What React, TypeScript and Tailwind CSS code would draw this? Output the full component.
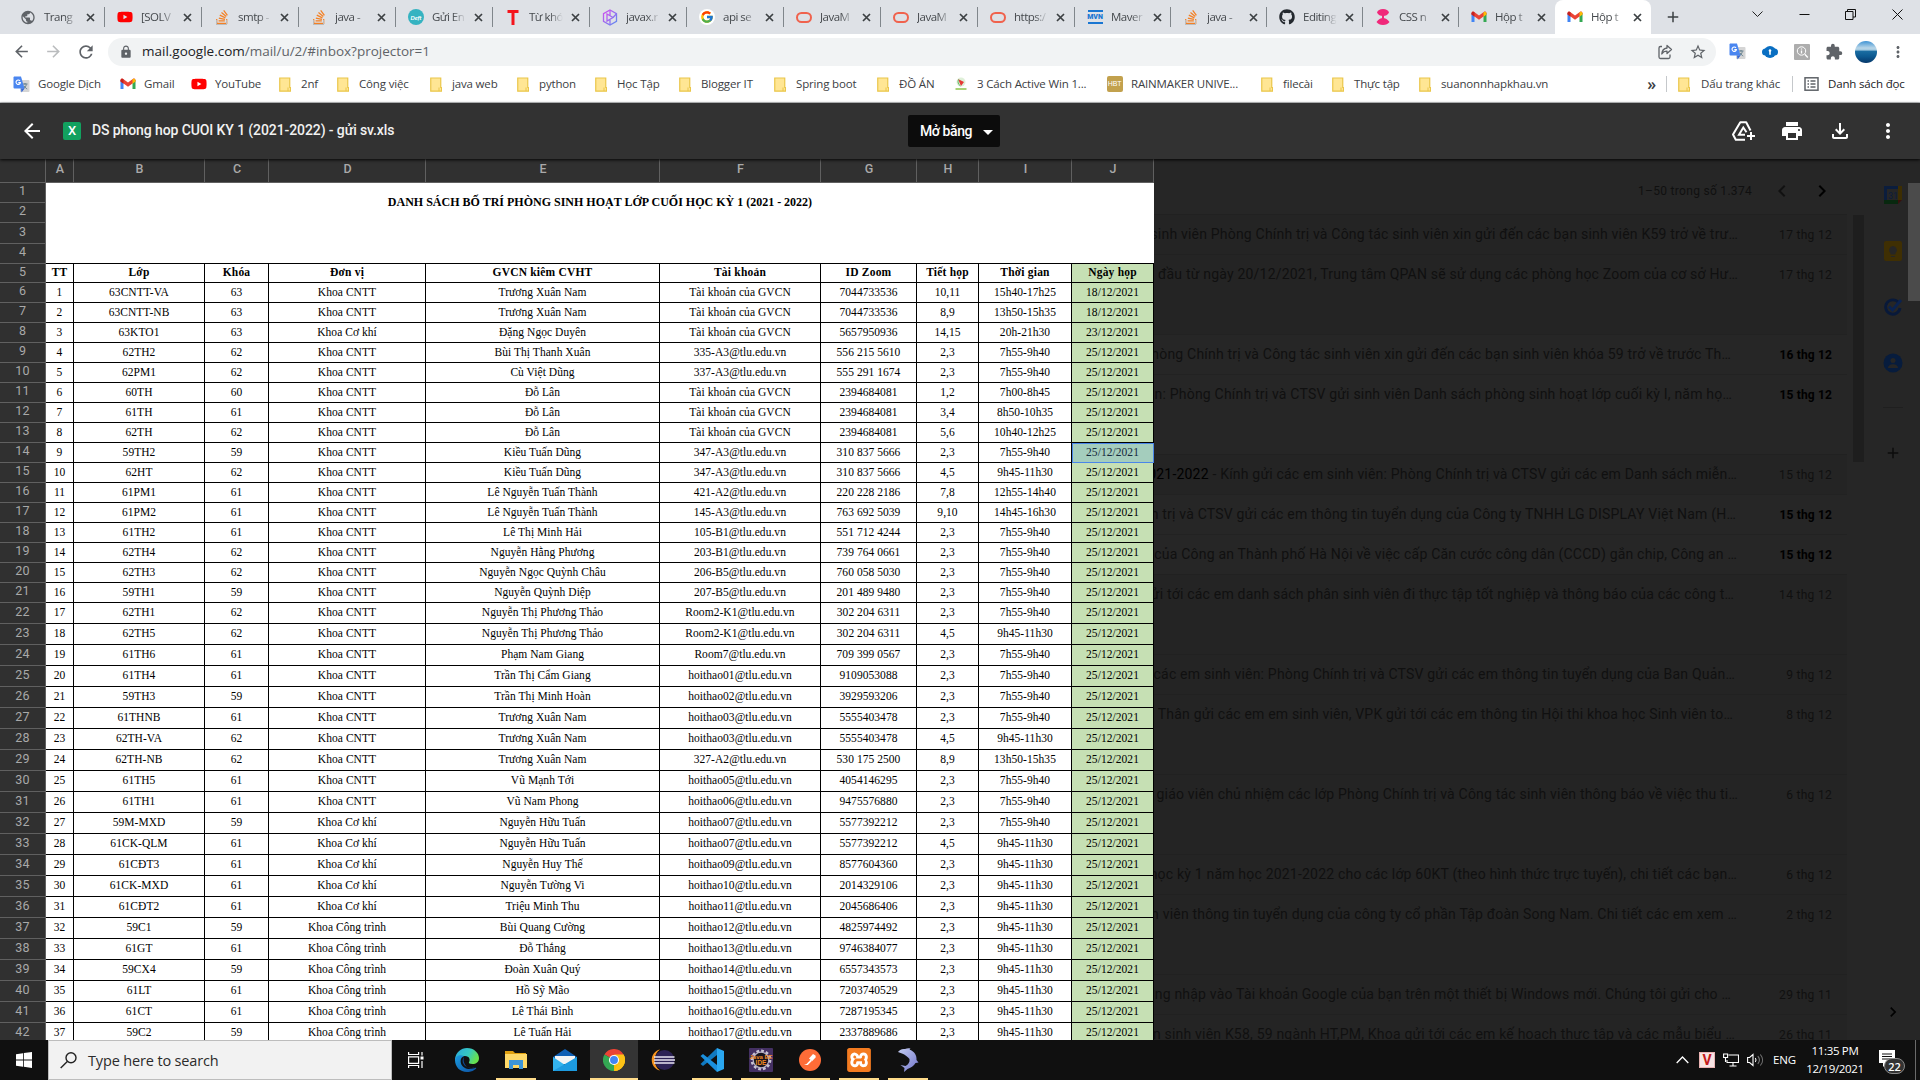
import React from "react";
import { FcGoogle } from "react-icons/fc";
import { FaYoutube, FaGithub } from "react-icons/fa";
import { FaStackOverflow } from "react-icons/fa6";
import { SiXampp } from "react-icons/si";
import {
  MdArrowBack,
  MdArrowForward,
  MdRefresh,
  MdLock,
  MdStarOutline,
  MdExtension,
  MdMoreVert,
  MdPrint,
  MdArrowDropDown,
  MdAdd,
  MdOutlineFileDownload,
  MdPublic,
  MdChevronLeft,
  MdChevronRight,
} from "react-icons/md";

const UI = "font-['Open_Sans','Noto_Sans',sans-serif]";

/* ---------- small logos ---------- */

function Gmail() {
  return (
    <svg width="16" height="16" viewBox="0 0 16 16">
      <path d="M0.5 4v9h3V6.5z" fill="#4285f4" />
      <path d="M15.5 4v9h-3V6.5z" fill="#34a853" />
      <path d="M0.5 4.2c0-1.6 1.8-2 2.7-1.2L8 6.6 12.800 3c.9-.8 2.700-.4 2.700 1.200v1L8 10.700.5 5.200z" fill="#ea4335" />
      <path d="M12.500 3.300c.9-.9 3-.6 3 1.200v1l-3 2.200z" fill="#fbbc04" />
      <path d="M.5 4.500c0-1.800 2.100-2.100 3-1.200v4.400L.5 5.500z" fill="#c5221f" />
    </svg>
  );
}

function Translate() {
  return (
    <svg width="17" height="17" viewBox="0 0 17 17">
      <rect x="7" y="4" width="9.500" height="12" rx="1" fill="#d5d5d5" />
      <path d="M9.500 8h5M12 7v1.500M10.300 13c2-1.500 2.700-3 3-4.500M11 9.800c.8 1.600 2 2.500 3.200 3.200" stroke="#607d8b" strokeWidth="1" fill="none" />
      <path d="M1 .5h7l3.500 12H1.500a1 1 0 0 1-1-1V1.500z" fill="#4a86f0" />
      <path d="M8.500 16.500l3-4H8z" fill="#3367d6" />
      <path d="M7 4.900A2.200 2.200 0 1 0 7.400 6.600H5.300" stroke="#fff" strokeWidth="1.100" fill="none" />
    </svg>
  );
}

function Folder() {
  return (
    <svg width="12" height="15" viewBox="0 0 12 15">
      <path d="M.75 1h10v9.500h.8v3.700H.75z" fill="#ffe694" stroke="#eac64a" strokeWidth="1.200" />
      <path d="M9 10.500v3.500" stroke="#eac64a" strokeWidth="1" />
    </svg>
  );
}

function Oracle() {
  return <span className="block h-[11px] w-4 rounded-full border-[2.500px] border-[#f0624d]" />;
}

function Stack() {
  return (
    <span className="relative block h-4 w-4">
      <FaStackOverflow size={16} color="#f48024" />
      <span className="absolute bottom-0 left-[2px] h-[5px] w-[11px] border-x border-b border-[#bcbbbb]" />
    </span>
  );
}

function Deft() {
  return (
    <span className="flex h-4 w-4 items-center justify-center rounded-full bg-[#35b3c1] font-['Lato',sans-serif] text-[6px] font-bold italic text-white">
      Deft
    </span>
  );
}

function BigT() {
  return (
    <svg width="16" height="16" viewBox="0 0 16 16">
      <path d="M2.500 1h11v3h-4v12h-3V4h-4z" fill="#f4141c" />
    </svg>
  );
}

function Hexagon() {
  return (
    <svg width="16" height="17" viewBox="0 0 16 17" fill="none" strokeWidth="1.300">
      <defs>
        <linearGradient id="hx" x1="0" y1="0" x2="1" y2="1">
          <stop offset="0" stopColor="#d44df0" />
          <stop offset="1" stopColor="#5b8def" />
        </linearGradient>
      </defs>
      <path d="M8 1l6.500 3.700v7.600L8 16l-6.500-3.700V4.700z" stroke="url(#hx)" />
      <path d="M5 5l6 3.500L5 12zM8 1v5.500M8 16v-5M14.500 4.700L11 8.500" stroke="url(#hx)" />
    </svg>
  );
}

function GoogleG() {
  return (
    <span className="flex h-4 w-4 items-center justify-center rounded-full bg-white">
      <FcGoogle size={14} />
    </span>
  );
}

function Maven() {
  return (
    <span className="flex h-[14px] w-[15px] items-center justify-center border-y-2 border-[#1976d2] text-[#1976d2]">
      <span className="font-['Roboto',sans-serif] text-[7px] font-black leading-none">MVN</span>
    </span>
  );
}

function PinkIcon() {
  return (
    <svg width="14" height="16" viewBox="0 0 14 16" fill="#f0287a">
      <path d="M7 0c3 0 5.500 1.500 6 3.500C12 6 9.500 7 7 7S2 6 1 3.500C1.500 1.500 4 0 7 0z" />
      <path d="M7 9c2.500 0 4.500 1.500 6.500 4-1.500 2-3.500 3-6.500 3s-5-1-6.500-3C2.500 10.500 4.500 9 7 9zM6 6h2v4H6z" />
    </svg>
  );
}

/* ---------- browser chrome ---------- */

type Tab = { icon: React.ReactNode; label: string };

const wideTabs: Tab[] = [
  { icon: <MdPublic size={17} color="#5f6368" />, label: "Trang" },
  { icon: <FaYoutube size={16} color="#f00" />, label: "[SOLV" },
  { icon: <Stack />, label: "smtp -" },
  { icon: <Stack />, label: "java -" },
  { icon: <Deft />, label: "Gửi En" },
  { icon: <BigT />, label: "Từ khó" },
  { icon: <Hexagon />, label: "javax.r" },
  { icon: <GoogleG />, label: "api se" },
  { icon: <Oracle />, label: "JavaM" },
  { icon: <Oracle />, label: "JavaM" },
  { icon: <Oracle />, label: "https:/" },
];

const narrowTabs: Tab[] = [
  { icon: <Maven />, label: "Maver" },
  { icon: <Stack />, label: "java -" },
  { icon: <FaGithub size={16} color="#24292f" />, label: "Editing" },
  { icon: <PinkIcon />, label: "CSS n" },
  { icon: <Gmail />, label: "Hộp t" },
];

function TabInner({ tab }: { tab: Tab }) {
  return (
    <>
      <span className="flex w-4 shrink-0 items-center justify-center">{tab.icon}</span>
      <span className="ml-2 w-[34px] shrink-0 overflow-hidden whitespace-nowrap text-[11.500px] tracking-[-0.5px] text-[#45494d] [mask-image:linear-gradient(to_right,black_60%,transparent)]">
        {tab.label}
      </span>
      <svg className="ml-2 shrink-0" width="9" height="9" viewBox="0 0 9 9" stroke="#3c4043" strokeWidth="1.700">
        <path d="M1 1l7 7M8 1L1 8" />
      </svg>
    </>
  );
}

function TabStrip() {
  return (
    <div className="flex h-[34px] items-stretch bg-[#dee1e6] pl-2">
      {wideTabs.map((t, i) => (
        <div key={i} className="flex w-[97px] items-center pl-3">
          <TabInner tab={t} />
          <span className="ml-auto h-5 w-px bg-[#80868b]" />
        </div>
      ))}
      {narrowTabs.map((t, i) => (
        <div key={i} className="flex w-24 items-center pl-3">
          <TabInner tab={t} />
          {i < narrowTabs.length - 1 && <span className="ml-auto h-5 w-px bg-[#80868b]" />}
        </div>
      ))}
      <div className="flex w-24 items-center rounded-t-lg bg-white pl-3">
        <TabInner tab={{ icon: <Gmail />, label: "Hộp t" }} />
      </div>
      <div className="flex w-11 items-center justify-center">
        <MdAdd size={18} color="#3c4043" />
      </div>
      <div className="ml-auto flex w-[168px] items-start justify-between pr-[17px] pt-[9px]">
        <svg width="11" height="11" viewBox="0 0 11 11" fill="none" stroke="#222">
          <path d="M.5 2.500l5 5 5-5" />
        </svg>
        <svg width="11" height="11" viewBox="0 0 11 11" fill="none" stroke="#111">
          <path d="M.5 5.500h10" />
        </svg>
        <svg width="11" height="11" viewBox="0 0 11 11" fill="none" stroke="#111">
          <path d="M.5 2.500h7.500v8H.5zM2.500 2.500v-2h8v7.500H8" />
        </svg>
        <svg width="11" height="11" viewBox="0 0 11 11" fill="none" stroke="#111">
          <path d="M.5.5l10 10M10.500.5l-10 10" />
        </svg>
      </div>
    </div>
  );
}

function Toolbar() {
  return (
    <div className="flex h-[35px] items-center bg-white text-[#5f6368]">
      <div className="flex w-[108px] items-center gap-[13px] pl-3">
        <MdArrowBack size={19} />
        <MdArrowForward size={19} className="text-[#babcbe]" />
        <MdRefresh size={20} />
      </div>
      <div className="flex h-7 w-[1608px] items-center rounded-full bg-[#f1f3f4] pl-[11px] pr-[9px]">
        <MdLock size={14} />
        <span className="ml-[9px] text-[13.500px] tracking-[-0.01px] text-[#5f6368]">
          <span className="text-[#202124]">mail.google.com</span>/mail/u/2/#inbox?projector=1
        </span>
        <svg className="ml-auto" width="17" height="16" viewBox="0 0 17 16" fill="none" stroke="#5f6368" strokeWidth="1.300">
          <path d="M5 2.500H3.500a1.500 1.500 0 0 0-1.500 1.500v9A1.500 1.500 0 0 0 3.500 14.500h8A1.500 1.500 0 0 0 13 13v-2.500" />
          <path d="M10 1.500l4.500 4-4.500 4V7.200C7.500 7.200 6 8 4.800 10c.2-3 2-5.500 5.200-6z" strokeLinejoin="round" />
        </svg>
        <MdStarOutline size={18} className="ml-[15px]" />
      </div>
      <div className="flex items-center pl-[13px]">
        <Translate />
        <svg className="ml-4" width="16" height="12" viewBox="0 0 16 12">
          <circle cx="8" cy="6" r="6" fill="#0a6fc2" />
          <rect x="0" y="2.500" width="16" height="7" rx="3.500" fill="#0a6fc2" />
          <path d="M8 3.200a1.400 1.400 0 0 1 .8 2.500v3H7.200v-3A1.400 1.400 0 0 1 8 3.200z" fill="#fff" />
        </svg>
        <svg className="ml-4" width="16" height="16" viewBox="0 0 16 16">
          <rect width="16" height="16" rx="1" fill="#adadad" />
          <circle cx="7.500" cy="7" r="4.200" fill="none" stroke="#fff" />
          <path d="M7.500 6.500v3M7.500 4.500v1M10.800 10.300l3 3.200" stroke="#fff" strokeWidth="1.300" />
        </svg>
        <MdExtension size={18} className="ml-[15px]" />
        <span className="ml-3 h-[22px] w-[22px] rounded-full bg-[linear-gradient(to_bottom,#3f93d4_0%,#b9d6e8_32%,#9ec7df_42%,#1b6ea3_45%,#0d5a91_70%,#06376a_100%)]" />
        <MdMoreVert size={18} className="ml-3" />
      </div>
    </div>
  );
}

const bookmarks: { label: string; w: number; icon?: React.ReactNode }[] = [
  { label: "Google Dịch", w: 106, icon: <Translate /> },
  { label: "Gmail", w: 71, icon: <Gmail /> },
  { label: "YouTube", w: 86, icon: <FaYoutube size={16} color="#f00" /> },
  { label: "2nf", w: 58 },
  { label: "Công việc", w: 93 },
  { label: "java web", w: 87 },
  { label: "python", w: 78 },
  { label: "Học Tập", w: 84 },
  { label: "Blogger IT", w: 95 },
  { label: "Spring boot", w: 103 },
  { label: "ĐỒ ÁN", w: 78 },
  {
    label: "3 Cách Active Win 1...",
    w: 154,
    icon: (
      <svg width="12" height="14" viewBox="0 0 12 14">
        <circle cx="6" cy="5" r="4.500" fill="#dff0d8" />
        <path d="M3 2l6 3-3 4z" fill="#e53935" />
        <path d="M3.500 2.500c-1 2-.5 5 2 6.500" stroke="#66bb6a" fill="none" />
        <path d="M.5 12h11" stroke="#8bc34a" strokeWidth="1.500" />
      </svg>
    ),
  },
  {
    label: "RAINMAKER UNIVE...",
    w: 152,
    icon: (
      <span className="flex h-4 w-4 shrink-0 items-center justify-center rounded-[2px] bg-[#c2a14d] font-['Liberation_Sans',sans-serif] text-[7px] text-white">
        HBT
      </span>
    ),
  },
  { label: "filecài", w: 71 },
  { label: "Thực tập", w: 87 },
  { label: "suanonnhapkhau.vn", w: 160 },
];

function Bookmarks() {
  return (
    <div className="flex h-[34px] items-center border-b border-[#c8cacc] bg-white pb-[3px] pl-[13px] text-[11.500px] tracking-[-0.16px] text-[#3c4043]">
      {bookmarks.map((b) => (
        <div key={b.label} className="flex shrink-0 items-center whitespace-nowrap" style={{ width: b.w }}>
          <span className="flex w-[17px] shrink-0 justify-center">{b.icon ?? <Folder />}</span>
          <span className="ml-2">{b.label}</span>
        </div>
      ))}
      <span className="ml-auto text-[16px] font-semibold leading-none">»</span>
      <span className="ml-[10px] h-4 w-px bg-[#c5c8cb]" />
      <span className="ml-[11px]">
        <Folder />
      </span>
      <span className="ml-[11px] w-[80px] whitespace-nowrap">Dấu trang khác</span>
      <span className="ml-[11px] h-4 w-px bg-[#c5c8cb]" />
      <svg className="ml-[11px]" width="15" height="14" viewBox="0 0 15 14" fill="none" stroke="#5f6368" strokeWidth="1.500">
        <rect x="1" y=".8" width="13" height="12.400" />
        <path d="M3.500 4h1.500M6.500 4h5M3.500 7h1.500M6.500 7h5M3.500 10h1.500M6.500 10h5" />
      </svg>
      <span className="ml-[9px] mr-[13px] w-[79px] whitespace-nowrap text-[#202124]">Danh sách đọc</span>
    </div>
  );
}

/* ---------- viewer header ---------- */

function AddToDrive() {
  return (
    <svg width="26" height="24" viewBox="0 0 26 24" fill="none" stroke="#fff" strokeWidth="2">
      <path d="M19.500 11.500L15.200 3.200H9.300L2 15.500 4.800 20.800H14" strokeLinejoin="round" />
      <path d="M15.500 13.200L12.300 8.500 8 15.800h6" />
      <path d="M20 13v8M16 17h8" />
    </svg>
  );
}

function ViewerHeader() {
  return (
    <div className="relative z-10 grid h-14 grid-cols-[1fr_auto_1fr] items-center bg-[#323232] text-white shadow-[0_1px_3px_rgba(0,0,0,0.9)]">
      <div className="flex items-center pl-5">
        <MdArrowBack size={24} />
        <span className="ml-[19px] flex h-[18px] w-[18px] items-center justify-center rounded-[2px] bg-[#12a15f] font-['Roboto',sans-serif] text-[13px] font-medium text-white">
          X
        </span>
        <span className="ml-[11px] whitespace-nowrap pb-px font-['Roboto',sans-serif] text-[14px] font-medium tracking-[-0.1px] text-[#f1f1f1]">
          DS phong hop CUOI KY 1 (2021-2022) - gửi sv.xls
        </span>
      </div>
      <div className="-ml-3 flex h-8 w-[92px] items-center rounded-[2px] bg-[#0c0c0c] pl-3 font-['Roboto',sans-serif] text-[14px] font-medium tracking-[-0.4px]">
        <span className="w-[52px] whitespace-nowrap">Mở bằng</span>
        <MdArrowDropDown size={24} className="ml-[4px] mt-[2px]" />
      </div>
      <div className="flex items-center justify-end gap-6 pr-5">
        <span className="-mr-px">
          <AddToDrive />
        </span>
        <MdPrint size={24} />
        <MdOutlineFileDownload size={24} />
        <MdMoreVert size={24} />
      </div>
    </div>
  );
}

/* ---------- spreadsheet ---------- */

const columns: [string, number][] = [
  ["A", 28],
  ["B", 131],
  ["C", 64],
  ["D", 157],
  ["E", 234],
  ["F", 161],
  ["G", 96],
  ["H", 62],
  ["I", 93],
  ["J", 82],
];

const NT = "Khoa CNTT";
const CK = "Khoa Cơ khí";
const CT = "Khoa Công trình";
const TK = "Tài khoản của GVCN";
const D25 = "25/12/2021";
const M1 = "7h55-9h40";
const M2 = "9h45-11h30";

const data: string[][] = [
  ["63CNTT-VA", "63", NT, "Trương Xuân Nam", TK, "7044733536", "10,11", "15h40-17h25", "18/12/2021"],
  ["63CNTT-NB", "63", NT, "Trương Xuân Nam", TK, "7044733536", "8,9", "13h50-15h35", "18/12/2021"],
  ["63KTO1", "63", CK, "Đặng Ngọc Duyên", TK, "5657950936", "14,15", "20h-21h30", "23/12/2021"],
  ["62TH2", "62", NT, "Bùi Thị Thanh Xuân", "335-A3@tlu.edu.vn", "556 215 5610", "2,3", M1, D25],
  ["62PM1", "62", NT, "Cù Việt Dũng", "337-A3@tlu.edu.vn", "555 291 1674", "2,3", M1, D25],
  ["60TH", "60", NT, "Đỗ Lân", TK, "2394684081", "1,2", "7h00-8h45", D25],
  ["61TH", "61", NT, "Đỗ Lân", TK, "2394684081", "3,4", "8h50-10h35", D25],
  ["62TH", "62", NT, "Đỗ Lân", TK, "2394684081", "5,6", "10h40-12h25", D25],
  ["59TH2", "59", NT, "Kiều Tuấn Dũng", "347-A3@tlu.edu.vn", "310 837 5666", "2,3", M1, D25],
  ["62HT", "62", NT, "Kiều Tuấn Dũng", "347-A3@tlu.edu.vn", "310 837 5666", "4,5", M2, D25],
  ["61PM1", "61", NT, "Lê Nguyễn Tuấn Thành", "421-A2@tlu.edu.vn", "220 228 2186", "7,8", "12h55-14h40", D25],
  ["61PM2", "61", NT, "Lê Nguyễn Tuấn Thành", "145-A3@tlu.edu.vn", "763 692 5039", "9,10", "14h45-16h30", D25],
  ["61TH2", "61", NT, "Lê Thị Minh Hải", "105-B1@tlu.edu.vn", "551 712 4244", "2,3", M1, D25],
  ["62TH4", "62", NT, "Nguyễn Hằng Phương", "203-B1@tlu.edu.vn", "739 764 0661", "2,3", M1, D25],
  ["62TH3", "62", NT, "Nguyễn Ngọc Quỳnh Châu", "206-B5@tlu.edu.vn", "760 058 5030", "2,3", M1, D25],
  ["59TH1", "59", NT, "Nguyễn Quỳnh Diệp", "207-B5@tlu.edu.vn", "201 489 9480", "2,3", M1, D25],
  ["62TH1", "62", NT, "Nguyễn Thị Phương Thảo", "Room2-K1@tlu.edu.vn", "302 204 6311", "2,3", M1, D25],
  ["62TH5", "62", NT, "Nguyễn Thị Phương Thảo", "Room2-K1@tlu.edu.vn", "302 204 6311", "4,5", M2, D25],
  ["61TH6", "61", NT, "Phạm Nam Giang", "Room7@tlu.edu.vn", "709 399 0567", "2,3", M1, D25],
  ["61TH4", "61", NT, "Trần Thị Cẩm Giang", "hoithao01@tlu.edu.vn", "9109053088", "2,3", M1, D25],
  ["59TH3", "59", NT, "Trần Thị Minh Hoàn", "hoithao02@tlu.edu.vn", "3929593206", "2,3", M1, D25],
  ["61THNB", "61", NT, "Trương Xuân Nam", "hoithao03@tlu.edu.vn", "5555403478", "2,3", M1, D25],
  ["62TH-VA", "62", NT, "Trương Xuân Nam", "hoithao03@tlu.edu.vn", "5555403478", "4,5", M2, D25],
  ["62TH-NB", "62", NT, "Trương Xuân Nam", "327-A2@tlu.edu.vn", "530 175 2500", "8,9", "13h50-15h35", D25],
  ["61TH5", "61", NT, "Vũ Mạnh Tới", "hoithao05@tlu.edu.vn", "4054146295", "2,3", M1, D25],
  ["61TH1", "61", NT, "Vũ Nam Phong", "hoithao06@tlu.edu.vn", "9475576880", "2,3", M1, D25],
  ["59M-MXD", "59", CK, "Nguyễn Hữu Tuấn", "hoithao07@tlu.edu.vn", "5577392212", "2,3", M1, D25],
  ["61CK-QLM", "61", CK, "Nguyễn Hữu Tuấn", "hoithao07@tlu.edu.vn", "5577392212", "4,5", M2, D25],
  ["61CĐT3", "61", CK, "Nguyễn Huy Thế", "hoithao09@tlu.edu.vn", "8577604360", "2,3", M2, D25],
  ["61CK-MXD", "61", CK, "Nguyễn Tường Vi", "hoithao10@tlu.edu.vn", "2014329106", "2,3", M2, D25],
  ["61CĐT2", "61", CK, "Triệu Minh Thu", "hoithao11@tlu.edu.vn", "2045686406", "2,3", M2, D25],
  ["59C1", "59", CT, "Bùi Quang Cường", "hoithao12@tlu.edu.vn", "4825974492", "2,3", M2, D25],
  ["61GT", "61", CT, "Đỗ Thắng", "hoithao13@tlu.edu.vn", "9746384077", "2,3", M2, D25],
  ["59CX4", "59", CT, "Đoàn Xuân Quý", "hoithao14@tlu.edu.vn", "6557343573", "2,3", M2, D25],
  ["61LT", "61", CT, "Hồ Sỹ Mão", "hoithao15@tlu.edu.vn", "7203740529", "2,3", M2, D25],
  ["61CT", "61", CT, "Lê Thái Bình", "hoithao16@tlu.edu.vn", "7287195345", "2,3", M2, D25],
  ["59C2", "59", CT, "Lê Tuấn Hải", "hoithao17@tlu.edu.vn", "2337889686", "2,3", M2, D25],
];

const headings = ["TT", "Lớp", "Khóa", "Đơn vị", "GVCN kiêm CVHT", "Tài khoản", "ID Zoom", "Tiết họp", "Thời gian", "Ngày họp"];

function RowHead({ n }: { n: number }) {
  return (
    <td className="border-b border-r border-[#606060] bg-[#303030] p-0 pb-[2px] text-center font-['Roboto',sans-serif] text-[12.500px] leading-none tracking-[0.2px] text-[#a9a9a9]">
      {n}
    </td>
  );
}

function Sheet() {
  return (
    <div className="h-[881px] w-[1154px] shrink-0 overflow-hidden">
      <table className="w-[1154px] table-fixed border-separate border-spacing-0 text-center">
        <colgroup>
          <col className="w-[46px]" />
          {columns.map(([name, w]) => (
            <col key={name} style={{ width: w }} />
          ))}
        </colgroup>
        <thead>
          <tr className="h-6 bg-[#303030] font-['Roboto',sans-serif] text-[12.500px] leading-none text-[#a9a9a9]">
            <th className="border-b border-r border-[#606060] p-0" />
            {columns.map(([name]) => (
              <th key={name} className="border-b border-r border-[#606060] p-0 pb-[2px] pl-px font-medium">
                {name}
              </th>
            ))}
          </tr>
        </thead>
        <tbody className="bg-white font-['Liberation_Serif',serif] text-[11.500px] leading-none text-black">
          <tr className="h-5">
            <RowHead n={1} />
            <td colSpan={10} rowSpan={2} className="p-0 pb-[2px] text-[12px] font-bold">
              DANH SÁCH BỐ TRÍ PHÒNG SINH HOẠT LỚP CUỐI HỌC KỲ 1 (2021 - 2022)
            </td>
          </tr>
          <tr className="h-5">
            <RowHead n={2} />
          </tr>
          <tr className="h-[21px]">
            <RowHead n={3} />
            <td colSpan={10} className="p-0" />
          </tr>
          <tr className="h-5">
            <RowHead n={4} />
            <td colSpan={10} className="border-b border-black p-0" />
          </tr>
          <tr className="h-[19px] tracking-[0.2px]">
            <RowHead n={5} />
            {headings.map((h, i) => (
              <td
                key={h}
                className={
                  i === 9
                    ? "border-b border-r border-black bg-[#c6e0b4] p-0 pb-px font-bold"
                    : "border-b border-r border-black p-0 pb-px font-bold"
                }
              >
                {h}
              </td>
            ))}
          </tr>
          {data.map((row, r) => (
            <tr key={r} className={r < 16 ? "h-5 tracking-[0.05px]" : "h-[21px] tracking-[0.05px]"}>
              <RowHead n={r + 6} />
              <td className="border-b border-r border-black p-0">{r + 1}</td>
              {row.map((cell, c) => (
                <td
                  key={c}
                  className={
                    c < 8
                      ? "whitespace-nowrap border-b border-r border-black p-0"
                      : r === 8
                        ? "border-b border-r border-[#4a86e8] bg-[#a4cdbd] p-0 text-[#14283c] shadow-[inset_1px_1px_0_#4a86e8]"
                        : "border-b border-r border-black bg-[#c6e0b4] p-0"
                  }
                >
                  {cell}
                </td>
              ))}
            </tr>
          ))}
        </tbody>
      </table>
    </div>
  );
}

/* ---------- mailbox behind the viewer ---------- */

type Mail = { text: string; lead?: string; date: string; end: number; unread?: boolean; h: number };

const mails: Mail[] = [
  { text: "sinh viên Phòng Chính trị và Công tác sinh viên xin gửi đến các bạn sinh viên K59 trở về trư…", date: "17 thg 12", end: 1737, h: 40 },
  { text: "đầu từ ngày 20/12/2021, Trung tâm QPAN sẽ sử dụng các phòng học Zoom của cơ sở Hư…", date: "17 thg 12", end: 1737, h: 80 },
  { text: "hòng Chính trị và Công tác sinh viên xin gửi đến các bạn sinh viên khóa 59 trở về trước Th…", date: "16 thg 12", end: 1730, unread: true, h: 40 },
  { text: "n: Phòng Chính trị và CTSV gửi sinh viên Danh sách phòng sinh hoạt lớp cuối kỳ I, năm họ…", date: "15 thg 12", end: 1731, unread: true, h: 80 },
  { lead: "021-2022", text: " - Kính gửi các em sinh viên: Phòng Chính trị và CTSV gửi các em Danh sách miễn…", date: "15 thg 12", end: 1736, h: 40 },
  { text: "h trị và CTSV gửi các em thông tin tuyển dụng của Công ty TNHH LG DISPLAY Việt Nam (H…", date: "15 thg 12", end: 1735, unread: true, h: 40 },
  { text: "của Công an Thành phố Hà Nội về việc cấp Căn cước công dân (CCCD) gắn chip, Công an …", date: "15 thg 12", end: 1736, unread: true, h: 40 },
  { text: "ửi tới các em danh sách phân sinh viên đi thực tập tốt nghiệp và thông báo của các công t…", date: "14 thg 12", end: 1733, h: 80 },
  { text: "các em sinh viên: Phòng Chính trị và CTSV gửi các em thông tin tuyển dụng của Ban Quản…", date: "9 thg 12", end: 1734, h: 40 },
  { text: "Thân gửi các em em sinh viên, VPK gửi tới các em thông tin Hội thi khoa học Sinh viên to…", date: "8 thg 12", end: 1732, h: 80 },
  { text: "giáo viên chủ nhiệm các lớp Phòng Chính trị và Công tác sinh viên thông báo về việc thu ti…", date: "6 thg 12", end: 1737, h: 80 },
  { text: "học kỳ 1 năm học 2021-2022 cho các lớp 60KT (theo hình thức trực tuyến), chi tiết các bạn…", date: "6 thg 12", end: 1736, h: 40 },
  { text: "h viên thông tin tuyển dụng của công ty cổ phần Tập đoàn Song Nam. Chi tiết các em xem …", date: "2 thg 12", end: 1736, h: 80 },
  { text: "ng nhập vào Tài khoản Google của bạn trên một thiết bị Windows mới. Chúng tôi gửi cho …", date: "29 thg 11", end: 1730, h: 40 },
  { text: "n sinh viên K58, 59 ngành HT,PM, Khoa gửi tới các em kế hoạch thực tập và các mẫu biểu …", date: "26 thg 11", end: 1734, h: 40 },
];

function Mailbox() {
  return (
    <div className="flex h-[881px] flex-1 overflow-hidden bg-[#262626] font-['Roboto',sans-serif]">
      <div className="w-[693px] shrink-0">
        <div className="flex h-[55px] items-center justify-end pr-[13px] pt-[9px] text-[12px] tracking-[0.3px] text-[#101010]">
          <span>1–50 trong số 1.374</span>
          <MdChevronLeft size={24} className="ml-[18px] text-[#111]" />
          <MdChevronRight size={24} className="ml-4 text-black" />
        </div>
        {mails.map((m, i) => (
          <div
            key={i}
            style={{ height: m.h }}
            className={
              m.unread
                ? "flex items-start border-t border-[#222222] bg-[#262626] pr-[15px]"
                : "flex items-start border-t border-[#212121] bg-[#242424] pr-[15px]"
            }
          >
            <div className="flex h-[38px] w-[590px] items-center justify-end overflow-hidden whitespace-nowrap text-[14px] tracking-[0.2px] text-[#101010]">
              <span className="text-black">{m.lead}</span>
              <span className="whitespace-pre" style={{ marginRight: 1743 - m.end }}>
                {m.text}
              </span>
            </div>
            <span
              className={
                m.unread
                  ? "ml-auto flex h-[39px] items-center whitespace-nowrap text-[12px] font-bold tracking-[0.15px] text-black"
                  : "ml-auto flex h-[39px] items-center whitespace-nowrap text-[12px] tracking-[0.3px] text-[#101010]"
              }
            >
              {m.date}
            </span>
          </div>
        ))}
      </div>
      <div className="ml-[6px] mt-14 h-[247px] w-[11px] shrink-0 bg-[#1e1e1e]" />
      <div className="flex w-11 shrink-0 flex-col items-center pl-[13px] pt-[26px]">
        <svg width="20" height="20" viewBox="0 0 20 20">
          <path d="M1 1h14v3H4v12H1z" fill="#0b1d3d" />
          <path d="M15 1h4v14h-4z" fill="#3d2e02" />
          <path d="M1 15h14v4H1z" fill="#08280f" />
          <path d="M15 19l4-4h-4z" fill="#3a100c" />
          <text x="10" y="13.500" textAnchor="middle" fontSize="9" fill="#0b1d3d" fontFamily="Roboto">
            31
          </text>
        </svg>
        <svg className="mt-9" width="20" height="20" viewBox="0 0 20 20">
          <rect x="1" width="18" height="20" rx="2" fill="#3f2f03" />
          <path d="M10 5a4 4 0 0 1 2.500 7v1.500h-5V12A4 4 0 0 1 10 5zM8 15h4v1H8z" fill="#262626" />
        </svg>
        <svg className="mt-9" width="20" height="20" viewBox="0 0 20 20" fill="none" stroke="#08193a" strokeWidth="2.800">
          <path d="M15.500 5.500A7.200 7.200 0 1 0 17 11" />
          <path d="M6 9.500l3.500 3.500 8.500-10" stroke="#0a2250" />
        </svg>
        <svg className="mt-9" width="20" height="20" viewBox="0 0 20 20">
          <circle cx="10" cy="10" r="9.500" fill="#071c3d" />
          <circle cx="10" cy="7.500" r="2.500" fill="#262626" />
          <path d="M5 15c0-5 10-5 10 0z" fill="#262626" />
        </svg>
        <span className="mt-[34px] h-px w-5 bg-[#1f1f1f]" />
        <MdAdd size={18} className="mt-9 text-[#0c0c0c]" />
        <MdChevronRight size={20} className="mt-[540px] shrink-0 text-black" />
      </div>
      <div className="ml-auto mt-6 h-[118px] w-3 shrink-0 bg-[#4b4b4b]" />
    </div>
  );
}

/* ---------- taskbar ---------- */

function EdgeIcon() {
  return (
    <svg width="24" height="24" viewBox="0 0 24 24">
      <defs>
        <linearGradient id="eg" x1="0" y1="0" x2="1" y2=".4">
          <stop offset="0" stopColor="#2aa9e0" />
          <stop offset=".6" stopColor="#36c9c0" />
          <stop offset="1" stopColor="#66e04f" />
        </linearGradient>
        <linearGradient id="eb" x1="0" y1="0" x2="1" y2="1">
          <stop offset="0" stopColor="#1b9de2" />
          <stop offset="1" stopColor="#0c4fa0" />
        </linearGradient>
      </defs>
      <path d="M0 11C1 4 6 0 12 0c7 0 12 5 12 10 0 4-3 6-6.500 6-3 0-4-1-3.500-2 1.500-2 .5-6-4-6-4 0-8 2-10 5z" fill="url(#eg)" />
      <path d="M0 12c0-4 5-6 9-4-3 1.500-4 4-3 7.500 1.500 5 8 7 14 4.500.8-.3 1.600-.2 1 .8A12 12 0 0 1 12 24C5 24 0 19 0 12z" fill="url(#eb)" />
      <path d="M9 9c-4 5 1 13 11 10.500C17 21 13 20.500 11 18s-3-5-2-9z" fill="#0e4a94" />
    </svg>
  );
}

function ExplorerIcon() {
  return (
    <svg width="22" height="20" viewBox="0 0 22 20">
      <path d="M0 1h8l2 2h11v4H0z" fill="#e0a010" />
      <path d="M0 4h22v14H0z" fill="#ffd968" />
      <path d="M4 10h14v9h-4v-4H8v4H4z" fill="#3d95d8" />
    </svg>
  );
}

function MailIcon() {
  return (
    <svg width="24" height="22" viewBox="0 0 24 22">
      <path d="M0 8l12-8 12 8v3H0z" fill="#0f5fb4" />
      <path d="M2 7h20v8H2z" fill="#f4f4f4" />
      <path d="M0 8l12 8 12-8v14H0z" fill="#33b3ee" />
      <path d="M0 22L24 8v14z" fill="#1d9be0" />
    </svg>
  );
}

function ChromeIcon() {
  return (
    <svg width="22" height="22" viewBox="0 0 24 24">
      <path d="M12 12L1.600 6A12 12 0 0 1 22.400 6z" fill="#ea4335" />
      <path d="M12 12L22.400 6A12 12 0 0 1 12 24z" fill="#fbbc05" />
      <path d="M12 12L12 24A12 12 0 0 1 1.600 6z" fill="#34a853" />
      <path d="M12 6h10.400A12 12 0 0 1 12 24l5.200-9z" fill="#fbc116" />
      <circle cx="12" cy="12" r="5.500" fill="#fff" />
      <circle cx="12" cy="12" r="4.300" fill="#4285f4" />
    </svg>
  );
}

function EclipseIcon() {
  return (
    <svg width="24" height="22" viewBox="0 0 24 22">
      <path d="M9 .5C-2 3-2 19 9 21.500 2 17 2 5 9 .5z" fill="#f7941e" />
      <circle cx="13.500" cy="11" r="10" fill="#2c2255" />
      <path d="M3 8h20.500M3 11h21M3 14h20.500" stroke="#e6e3f0" strokeWidth="1.500" />
    </svg>
  );
}

function CodeIcon() {
  return (
    <svg width="24" height="24" viewBox="0 0 24 24">
      <path d="M17 0l7 3v18l-7 3z" fill="#2aa7f0" />
      <path d="M17 0v7L3 18 .5 16z" fill="#1079c0" />
      <path d="M17 24v-7L3 6 .5 8z" fill="#1a8fdd" />
    </svg>
  );
}

function JavaEEIcon() {
  return (
    <svg width="24" height="24" viewBox="0 0 24 24">
      <rect width="24" height="24" rx="1" fill="#443063" />
      <circle cx="12" cy="12" r="9" fill="none" stroke="#c9c4d3" strokeWidth="2.800" strokeDasharray="2.700 2" />
      <circle cx="12" cy="12" r="7.800" fill="#17131d" stroke="#b9b3c6" strokeWidth="1.200" />
      <g fill="#f08a24" fontFamily="Liberation Sans" fontWeight="bold" textAnchor="middle">
        <text x="12" y="11" fontSize="6">Java EE</text>
        <text x="12" y="17" fontSize="6.500">IDE</text>
      </g>
    </svg>
  );
}

function PostmanIcon() {
  return (
    <svg width="22" height="22" viewBox="0 0 22 22">
      <circle cx="11" cy="11" r="11" fill="#ff6c37" />
      <path d="M5 16l2.500-1 4-4.200 1.300 1.300-4 3.900z" fill="#fff" />
      <path d="M10 9.500l4-4.500 2.500 1.500.3 1.700-3.800 4z" fill="#fff" />
    </svg>
  );
}

function XamppIcon() {
  return (
    <span className="flex h-6 w-6 items-center justify-center rounded-[3px] bg-[linear-gradient(to_right,#fff,#fff)] bg-[length:20px_20px] bg-center bg-no-repeat">
      <SiXampp size={24} color="#f47b20" />
    </span>
  );
}

function DolphinIcon() {
  return (
    <svg width="22" height="24" viewBox="0 0 22 24">
      <defs>
        <linearGradient id="dl" x1="0" y1="0" x2="1" y2="1">
          <stop offset="0" stopColor="#c4cdf0" />
          <stop offset="1" stopColor="#6f72c9" />
        </linearGradient>
      </defs>
      <path d="M1 4c1-2 4-3.500 7-3 2-.8 4-1 5.500-.3l-1 1C17 3 20 7 19.500 12l2 2.500-3 .5c-1.500 3-5 5-8 6L7 24l.5-4-4-3 5 1c3-1.500 4.500-4 4-7C11 9 8 6.500 5 5.500z" fill="url(#dl)" />
    </svg>
  );
}

const apps: { icon: React.ReactNode; open?: boolean; active?: boolean }[] = [
  { icon: <EdgeIcon /> },
  { icon: <ExplorerIcon />, open: true },
  { icon: <MailIcon /> },
  { icon: <ChromeIcon />, open: true, active: true },
  { icon: <EclipseIcon /> },
  { icon: <CodeIcon />, open: true },
  { icon: <JavaEEIcon />, open: true },
  { icon: <PostmanIcon />, open: true },
  { icon: <XamppIcon />, open: true },
  { icon: <DolphinIcon />, open: true },
];

function Taskbar() {
  return (
    <div className="flex h-10 items-stretch bg-[#101010] text-white">
      <div className="flex w-12 items-center justify-center">
        <svg width="16" height="16" viewBox="0 0 16 16" fill="#fff">
          <path d="M0 2.200L7 1.200v6.300H0zM7.800 1.100L16 0v7.500H7.800zM0 8.400h7v6.300l-7-1zM7.800 8.400H16V16l-8.200-1.200z" />
        </svg>
      </div>
      <div className="flex w-[344px] items-center border border-[#bdbdbd] bg-[#f2f2f2] pl-[11px] text-[#2b2b2b]">
        <svg width="17" height="17" viewBox="0 0 17 17" fill="none" stroke="#222" strokeWidth="1.400">
          <circle cx="11" cy="5.800" r="5" />
          <path d="M7.300 9.500L.7 16" />
        </svg>
        <span className="ml-[11px] whitespace-nowrap pt-px text-[14.500px] tracking-[-0.15px]">Type here to search</span>
      </div>
      <div className="flex w-[50px] items-center justify-center pr-px">
        <svg width="17" height="16" viewBox="0 0 17 16" fill="none" stroke="#fff" strokeWidth="1.200">
          <path d="M.6 0v2.500h10V0M.6 16v-2.500h10V16M.6 4.800h10v6.500H.6zM14 0v3.500M14 9v7" />
          <path d="M12.500 4.500h3v3h-3z" fill="#fff" stroke="none" />
        </svg>
      </div>
      {apps.map((a, i) => (
        <div key={i} className="flex w-[49px] flex-col items-center">
          <div className={a.active ? "flex w-12 flex-1 items-center justify-center bg-[#343434]" : "flex flex-1 items-center justify-center"}>{a.icon}</div>
          {a.open && <span className={a.active ? "-mt-[2px] h-[2px] w-12 bg-[#ffdc8a]" : "-mt-[2px] h-[2px] w-10 bg-[#ffdc8a]"} />}
        </div>
      ))}
      <div className="ml-auto flex items-center">
        <svg width="13" height="8" viewBox="0 0 13 8" fill="none" stroke="#fff" strokeWidth="1.300">
          <path d="M.7 7l5.800-6 5.800 6" />
        </svg>
        <span className="ml-[10px] flex h-4 w-4 items-center justify-center border border-[#e8b3b3] bg-[#f7e3e3] font-['Roboto',sans-serif] text-[14px] font-bold leading-none text-[#c41a1a]">
          V
        </span>
        <svg className="ml-2" width="16" height="14" viewBox="0 0 16 14" fill="none" stroke="#fff" strokeWidth="1.100">
          <path d="M5.500 2h10v7.500H4V7M10 9.500V13M6.500 13h7M.6 1h4v3.500h-4zM2.500 4.500V9" />
        </svg>
        <svg className="ml-2" width="17" height="14" viewBox="0 0 17 14" fill="none" stroke="#fff" strokeWidth="1.100">
          <path d="M.6 4.500h2L6 1.500v11L2.600 9.500h-2z" />
          <path d="M8.300 5c.9 1.200.9 2.800 0 4" />
          <path d="M10.800 3.200c1.900 2.200 1.900 5.400 0 7.600M13.300 1.500c3 3.300 3 7.700 0 11" stroke="#777" />
        </svg>
        <span className="ml-[9px] w-6 whitespace-nowrap text-[11.500px] tracking-[-0.2px]">ENG</span>
        <div className="ml-2 flex w-[60px] flex-col items-center whitespace-nowrap text-[11.500px] leading-[18px] tracking-[-0.35px]">
          <span>11:35 PM</span>
          <span>12/19/2021</span>
        </div>
        <div className="relative ml-[14px] h-5 w-9">
          <svg width="16" height="18" viewBox="0 0 16 18">
            <path d="M0 0h16v13H8l-4 4v-4H0z" fill="#fff" />
            <path d="M3 4h10M3 6.500h10M3 9h10" stroke="#101010" />
          </svg>
          <span className="absolute left-[5px] top-[8px] flex h-4 w-[21px] items-center justify-center rounded-full border border-[#8a8a8a] bg-[#333] text-[11px] font-semibold leading-none">
            22
          </span>
        </div>
        <span className="mr-1 h-10 w-px bg-[#6a6a6a]" />
      </div>
    </div>
  );
}

export default function App() {
  return (
    <div className={`flex h-[1080px] w-[1920px] flex-col overflow-hidden ${UI}`}>
      <TabStrip />
      <Toolbar />
      <Bookmarks />
      <ViewerHeader />
      <div className="flex h-[881px]">
        <Sheet />
        <Mailbox />
      </div>
      <Taskbar />
    </div>
  );
}
